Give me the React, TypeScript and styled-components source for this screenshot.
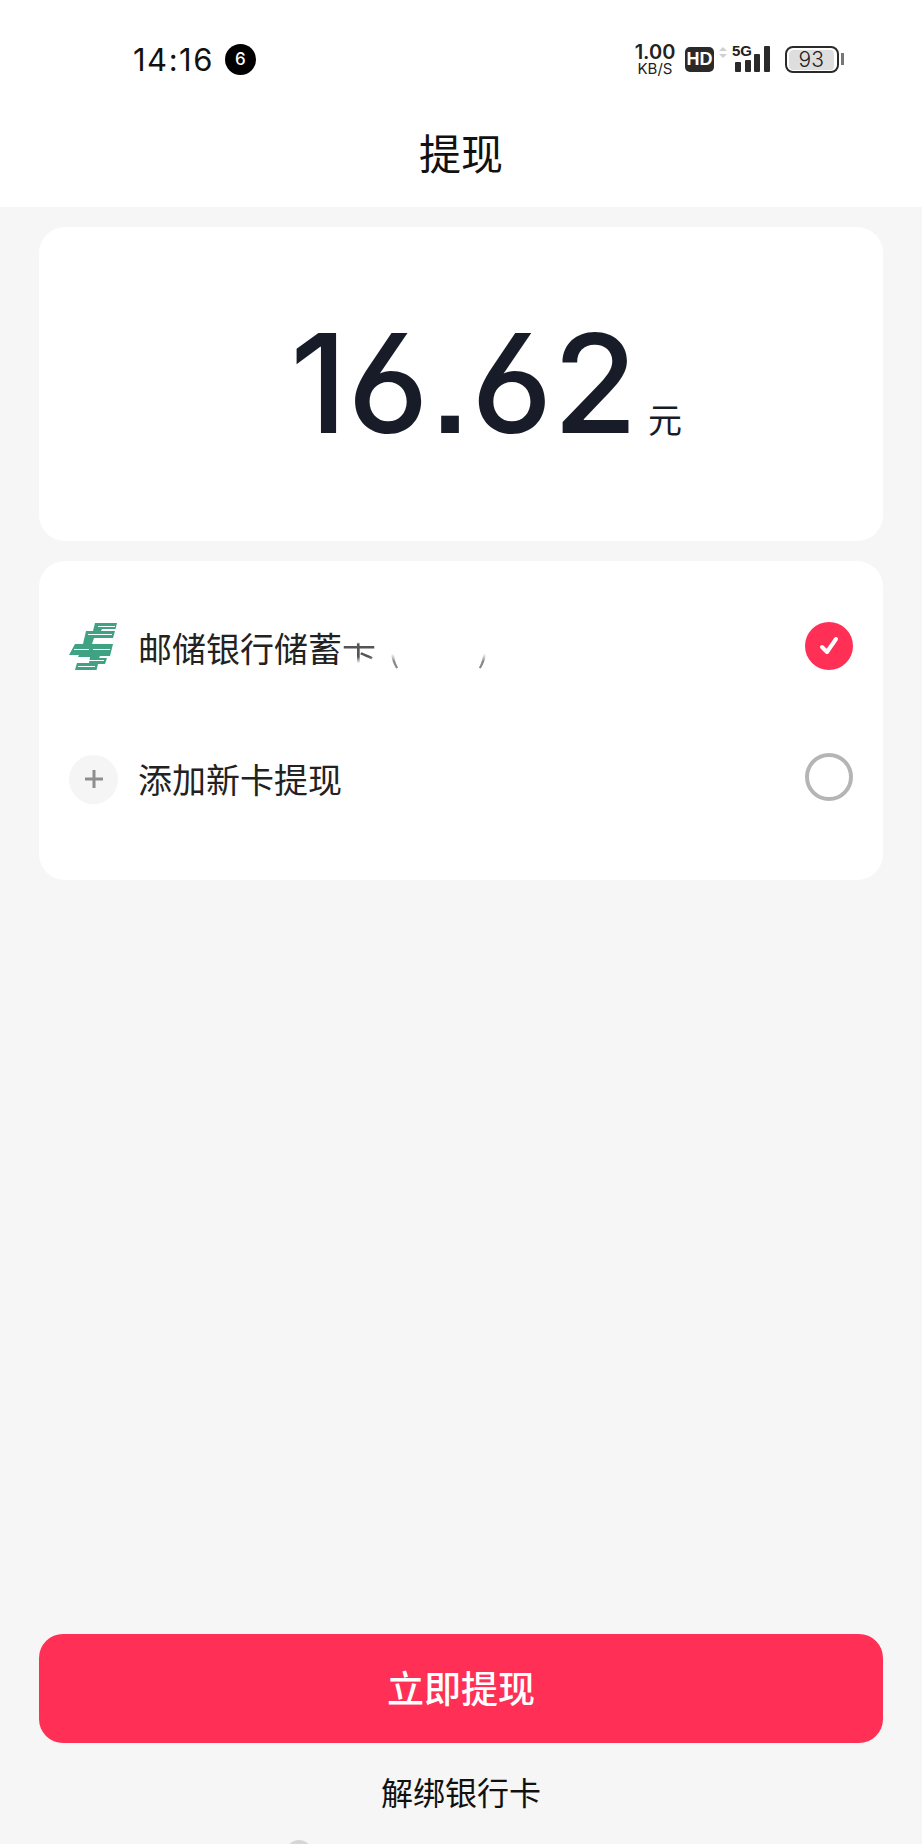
import React from 'react';
import styled, { createGlobalStyle } from 'styled-components';

const GlobalStyle = createGlobalStyle`
  html, body {
    margin: 0;
    padding: 0;
    background: #f6f6f6;
  }
`;

const Page = styled.div`
  width: 922px;
  height: 1844px;
  display: flex;
  flex-direction: column;
  background: #f6f6f6;
  overflow: hidden;
  font-family: "Noto Sans CJK SC", sans-serif;
`;

const Header = styled.header`
  height: 207px;
  background: #fff;
  flex-shrink: 0;
  display: flex;
  flex-direction: column;
`;

const StatusBar = styled.div`
  height: 118px;
  padding: 0 78px 0 133px;
  display: flex;
  align-items: center;
  justify-content: space-between;
  color: #111;
`;

const StatusLeft = styled.div`
  display: flex;
  align-items: center;
  gap: 11px;
`;

const Clock = styled.span`
  font-family: "Inter", sans-serif;
  font-size: 31px;
  letter-spacing: 1.5px;
  color: #111;
`;

const Badge = styled.span`
  width: 31px;
  height: 31px;
  border-radius: 50%;
  background: #000;
  color: #fff;
  font-family: "Inter", sans-serif;
  font-size: 17px;
  font-weight: 500;
  display: flex;
  align-items: center;
  justify-content: center;
`;

const StatusRight = styled.div`
  display: flex;
  align-items: center;
`;

const Speed = styled.div`
  width: 42px;
  display: flex;
  flex-direction: column;
  align-items: center;
  font-family: "Inter", sans-serif;
  color: #222;
`;

const SpeedValue = styled.span`
  font-size: 20px;
  font-weight: 600;
  line-height: 18px;
`;

const SpeedUnit = styled.span`
  font-size: 15px;
  line-height: 15px;
`;

const HdTag = styled.span`
  margin-left: 9px;
  width: 29px;
  height: 25px;
  border-radius: 5px;
  background: #2a2a2a;
  color: #fff;
  font-family: "Liberation Sans", sans-serif;
  font-size: 18px;
  font-weight: 700;
  display: flex;
  align-items: center;
  justify-content: center;
`;

const Signal = styled.div`
  margin-left: 5px;
  position: relative;
  width: 52px;
  height: 26px;
`;

const NetLabel = styled.span`
  position: absolute;
  left: 13px;
  top: -2px;
  font-family: "Liberation Sans", sans-serif;
  font-size: 15px;
  line-height: 14px;
  font-weight: 700;
  color: #222;
`;

const Battery = styled.div`
  margin-left: 14px;
  width: 54px;
  height: 27px;
  box-sizing: border-box;
  border: 2.5px solid #2a2a2a;
  border-radius: 8px;
  padding: 1.5px 3px 1.5px 1.5px;
  background: #dedede content-box;
  color: #222;
  font-family: "Inter", sans-serif;
  font-size: 21px;
  font-weight: 300;
  display: flex;
  align-items: center;
  justify-content: center;
`;

const BatteryCap = styled.span`
  margin-left: 2px;
  width: 3px;
  height: 12px;
  background: #777;
`;

const Title = styled.h1`
  margin: 9px 0 0;
  text-align: center;
  font-size: 42px;
  font-weight: 400;
  line-height: 50px;
  color: #111;
`;

const Content = styled.main`
  flex: 1;
  padding: 20px 39px 0;
  display: flex;
  flex-direction: column;
  gap: 20px;
`;

const Card = styled.section<{ $height: number }>`
  height: ${p => p.$height}px;
  box-sizing: border-box;
  background: #fff;
  border-radius: 26px;
`;

const AmountCard = styled(Card)`
  display: flex;
  align-items: flex-start;
  justify-content: center;
  padding: 86px 0 0 50px;
`;

const AmountValue = styled.span`
  font-family: "Inter", sans-serif;
  font-feature-settings: "ss07", "cv03";
  font-size: 137px;
  font-weight: 500;
  line-height: 140px;
  letter-spacing: 0.5px;
  color: #171c28;
`;

const AmountUnit = styled.span`
  font-size: 34px;
  line-height: 40px;
  margin: 86px 0 0 10px;
  color: #171c28;
`;

const MethodCard = styled(Card)`
  padding: 61px 30px 0;
  display: flex;
  flex-direction: column;
  gap: 83px;
`;

const MethodRow = styled.div`
  height: 48px;
  display: flex;
  align-items: center;
  gap: 20px;
`;

const MethodIcon = styled.span`
  width: 49px;
  height: 49px;
  flex-shrink: 0;
  display: flex;
  align-items: center;
  justify-content: center;
`;

const AddIcon = styled(MethodIcon)`
  margin-top: 4px;
  border-radius: 50%;
  background: #f5f5f5;
`;

const MethodName = styled.span`
  flex: 1;
  padding-top: 4px;
  font-size: 34px;
  line-height: 48px;
  color: #222;
  display: flex;
`;

const RedactedCard = styled.span`
  color: #555;
  -webkit-mask-image: linear-gradient(to bottom, transparent 38%, #000 42%, #000 68%, transparent 82%);
`;

const RedactedParen = styled.span<{ $gap: number }>`
  margin-left: ${p => p.$gap}px;
  color: #888;
  -webkit-mask-image: linear-gradient(to bottom, transparent 62%, #000 78%);
`;

const Radio = styled.span<{ $checked?: boolean }>`
  width: 48px;
  height: 48px;
  box-sizing: border-box;
  flex-shrink: 0;
  border-radius: 50%;
  border: ${p => (p.$checked ? 'none' : '4px solid #b5b5b5')};
  background: ${p => (p.$checked ? '#ff2f55' : '#fff')};
  display: flex;
  align-items: center;
  justify-content: center;
`;

const Footer = styled.footer`
  padding: 0 39px;
  display: flex;
  flex-direction: column;
  align-items: center;
  position: relative;
  height: 210px;
`;

const SubmitButton = styled.button`
  width: 100%;
  height: 109px;
  padding: 0 0 3px;
  border: none;
  border-radius: 24px;
  background: #ff2f55;
  color: #fff;
  font-family: inherit;
  font-size: 37px;
  font-weight: 500;
`;

const Unbind = styled.a`
  margin-top: 26px;
  font-size: 32px;
  line-height: 44px;
  color: #111;
`;

const AgreementDot = styled.span`
  position: absolute;
  left: 286px;
  top: 206px;
  width: 26px;
  height: 26px;
  border-radius: 50%;
  background: #d6d6d6;
`;

function PostalLogo() {
  return (
    <svg width="49" height="47" viewBox="0 0 49 47">
      <path
        fill="#3fa283"
        d="M26 0H48L46.5 6H33L32 8H46L44 15H25L23 21H44L41 33H31L30 35H38L36 41H29L27.500 47H6L8 40H20L21 34H9L10 32H0L6 21H14L17 8H24z"
      />
      <path d="M29 3.500H46M19 11.500H43M5 26.500H20M24 26.500H41M10 37.500H35M9 43.500H26" stroke="#fff" strokeWidth="1.200" fill="none" />
    </svg>
  );
}

function SignalBars() {
  return (
    <svg width="52" height="26" viewBox="0 0 52 26">
      <path d="M0 5l4-4 4 4zM0 8l4 4 4-4z" fill="#cfcfcf" />
      <rect x="16" y="16" width="6" height="10" rx="1" fill="#2a2a2a" />
      <rect x="26" y="14" width="6" height="12" rx="1" fill="#2a2a2a" />
      <rect x="35" y="8" width="6" height="18" rx="1" fill="#2a2a2a" />
      <rect x="45" y="0" width="6" height="26" rx="1" fill="#2a2a2a" />
    </svg>
  );
}

export default function App() {
  return (
    <Page>
      <GlobalStyle />
      <Header>
        <StatusBar>
          <StatusLeft>
            <Clock>14:16</Clock>
            <Badge>6</Badge>
          </StatusLeft>
          <StatusRight>
            <Speed>
              <SpeedValue>1.00</SpeedValue>
              <SpeedUnit>KB/S</SpeedUnit>
            </Speed>
            <HdTag>HD</HdTag>
            <Signal>
              <SignalBars />
              <NetLabel>5G</NetLabel>
            </Signal>
            <Battery>93</Battery>
            <BatteryCap />
          </StatusRight>
        </StatusBar>
        <Title>提现</Title>
      </Header>
      <Content>
        <AmountCard $height={314}>
          <AmountValue>16.62</AmountValue>
          <AmountUnit>元</AmountUnit>
        </AmountCard>
        <MethodCard $height={319}>
          <MethodRow>
            <MethodIcon><PostalLogo /></MethodIcon>
            <MethodName>
              邮储银行储蓄
              <RedactedCard>卡</RedactedCard>
              <RedactedParen $gap={12}>(</RedactedParen>
              <RedactedParen $gap={78}>)</RedactedParen>
            </MethodName>
            <Radio $checked>
              <svg width="24" height="22" viewBox="0 0 24 22">
                <path d="M5 12l5 5L19 4" fill="none" stroke="#fff" strokeWidth="4" strokeLinecap="round" strokeLinejoin="round" />
              </svg>
            </Radio>
          </MethodRow>
          <MethodRow>
            <AddIcon>
              <svg width="20" height="20" viewBox="0 0 20 20">
                <path d="M10 1v18M1 10h18" stroke="#8e8e8e" strokeWidth="3" />
              </svg>
            </AddIcon>
            <MethodName>添加新卡提现</MethodName>
            <Radio />
          </MethodRow>
        </MethodCard>
      </Content>
      <Footer>
        <SubmitButton>立即提现</SubmitButton>
        <Unbind>解绑银行卡</Unbind>
        <AgreementDot />
      </Footer>
    </Page>
  );
}
